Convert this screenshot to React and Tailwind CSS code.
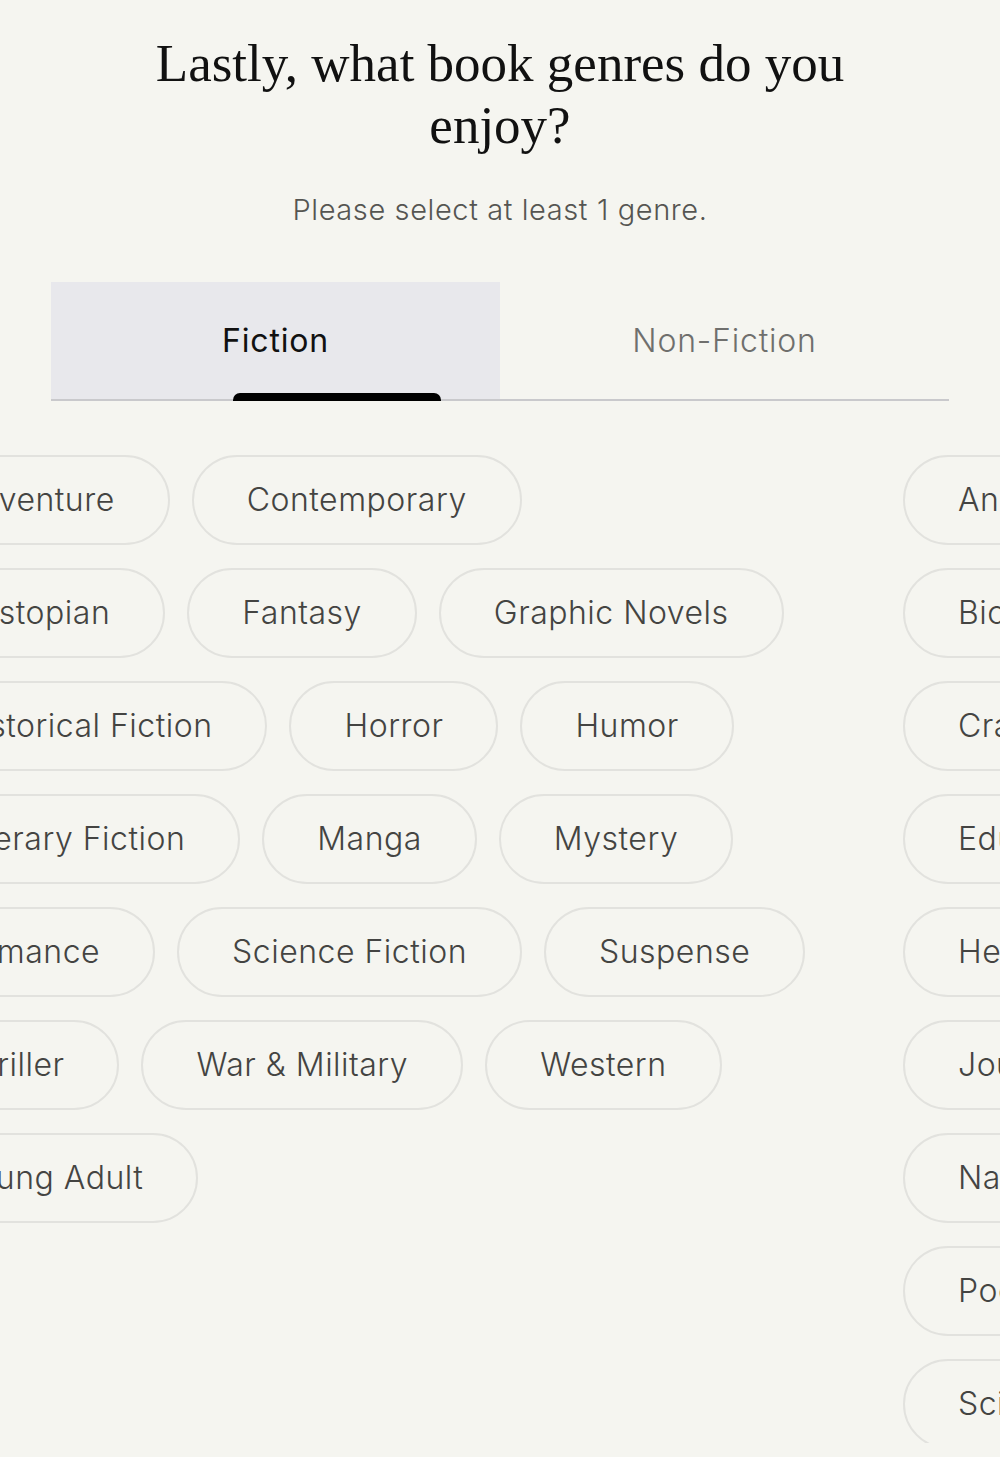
import React, { useState } from "react";

const fictionRows = [
  ["Adventure", "Contemporary"],
  ["Dystopian", "Fantasy", "Graphic Novels"],
  ["Historical Fiction", "Horror", "Humor"],
  ["Literary Fiction", "Manga", "Mystery"],
  ["Romance", "Science Fiction", "Suspense"],
  ["Thriller", "War & Military", "Western"],
  ["Young Adult"],
];

const nonFictionRows = [
  ["Animals"],
  ["Biography"],
  ["Crafts & Hobbies"],
  ["Education"],
  ["Health & Wellness"],
  ["Journalism"],
  ["Nature"],
  ["Poetry"],
  ["Science & Tech"],
];

function Pill({ label, selected, onClick }) {
  return (
    <button
      onClick={onClick}
      className={`shrink-0 h-[90px] px-[53px] rounded-full border-2 text-[32px] tracking-[0.5px] font-light whitespace-nowrap ${
        selected
          ? "border-black bg-black text-white"
          : "border-[#e2e2de] text-[#444442]"
      }`}
    >
      {label}
    </button>
  );
}

function Pane({ rows, selected, toggle, className }) {
  return (
    <div className={`shrink-0 flex flex-col gap-[23px] ${className}`}>
      {rows.map((row, i) => (
        <div key={i} className="flex gap-[22px]">
          {row.map((g) => (
            <Pill
              key={g}
              label={g}
              selected={selected.includes(g)}
              onClick={() => toggle(g)}
            />
          ))}
        </div>
      ))}
    </div>
  );
}

export default function App() {
  const [tab, setTab] = useState("fiction");
  const [selected, setSelected] = useState([]);

  const toggle = (g) =>
    setSelected((s) => (s.includes(g) ? s.filter((x) => x !== g) : [...s, g]));

  return (
    <div
      className="h-[1457px] overflow-hidden bg-[#f5f5f0]"
      style={{ fontFamily: "Inter, 'Noto Sans', sans-serif" }}
    >
      <h1
        className="pt-[32px] mx-auto w-[780px] text-center text-[53px] leading-[62px] text-[#111]"
        style={{ fontFamily: "'Liberation Serif', serif" }}
      >
        Lastly, what book genres do you enjoy?
      </h1>

      <p className="mt-[34px] text-center text-[29px] tracking-[0.6px] leading-[39px] font-light text-[#555552]">
        Please select at least 1 genre.
      </p>

      <div className="relative mt-[53px] mx-[51px] flex border-b-2 border-[#c9c9cc]">
        <button
          onClick={() => setTab("fiction")}
          className="flex-1 h-[117px] bg-[#e8e8ec] text-[32px] tracking-[0.8px] text-[#111]"
        >
          Fiction
        </button>
        <button
          onClick={() => setTab("nonfiction")}
          className="flex-1 h-[117px] text-[32px] tracking-[0.8px] font-light text-[#6f6f6d]"
        >
          Non-Fiction
        </button>
        <div className="absolute left-[182px] bottom-[-2px] w-[208px] h-[8px] rounded-t-[7px] bg-black" />
      </div>

      {/* carousel caught mid-slide between the two panes */}
      <div className="mt-[54px] h-[988px] overflow-hidden">
        <div className="flex -translate-x-[98px]">
          <Pane rows={fictionRows} selected={selected} toggle={toggle} className="w-[1001px]" />
          <Pane rows={nonFictionRows} selected={selected} toggle={toggle} className="" />
        </div>
      </div>
    </div>
  );
}
